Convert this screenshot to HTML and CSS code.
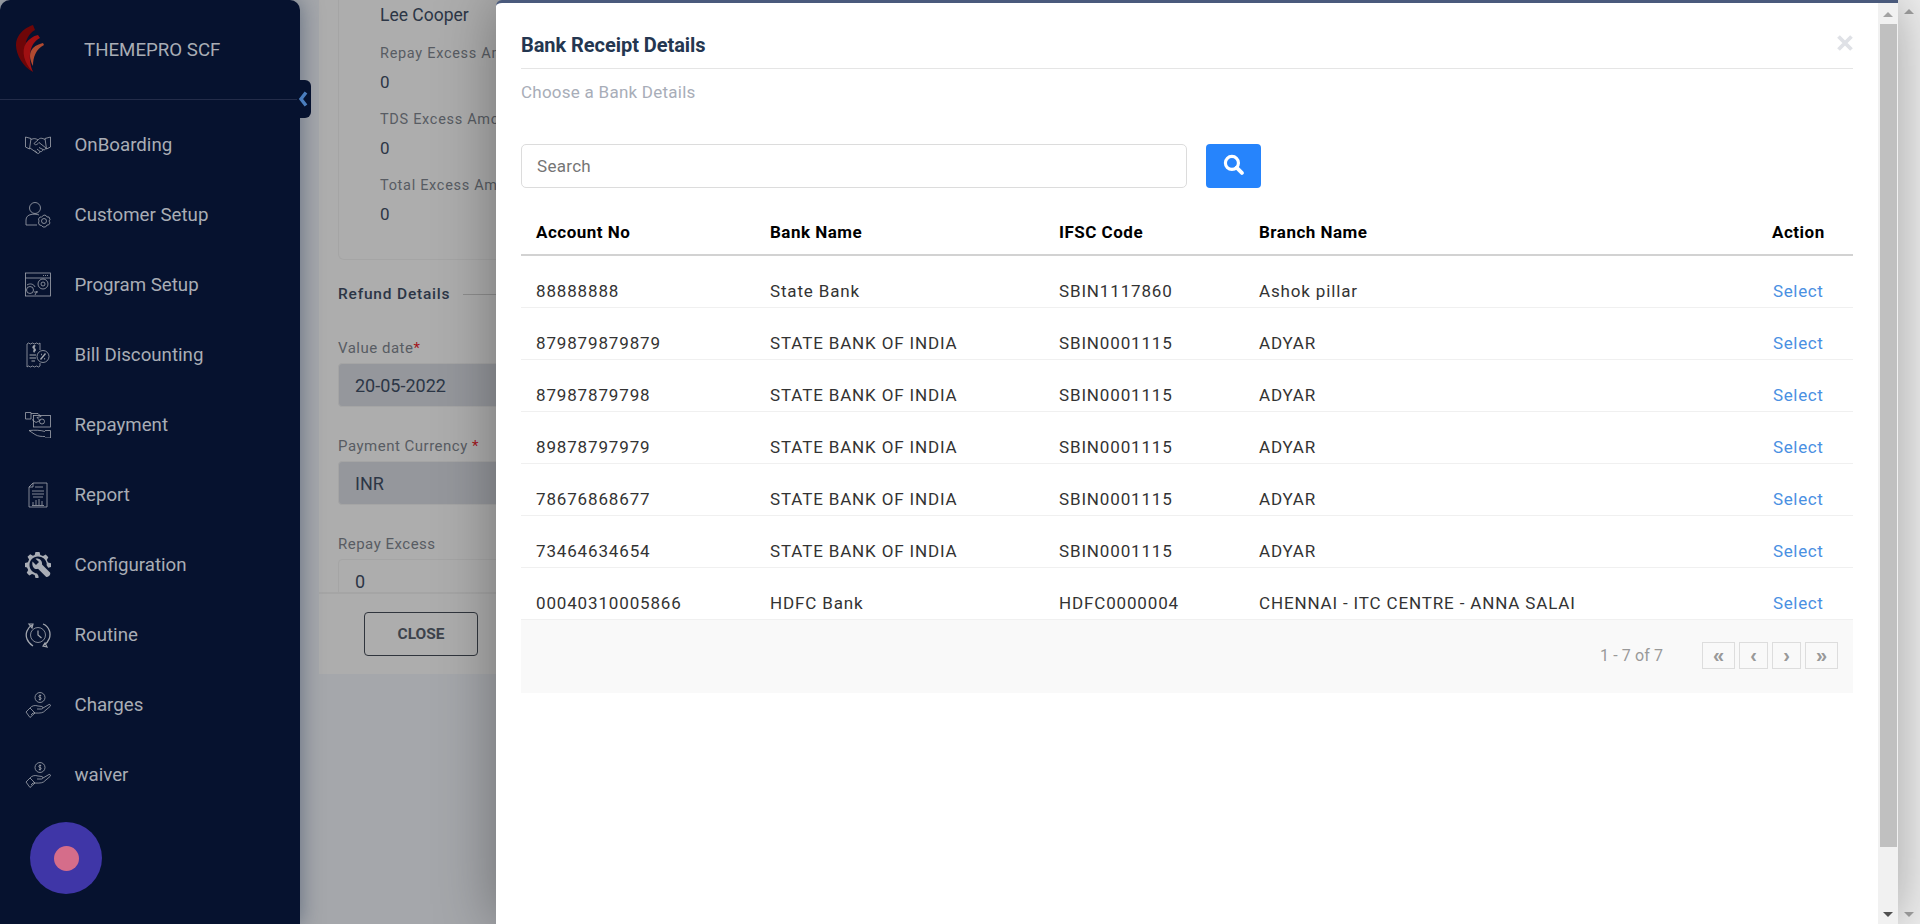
FILE: index.html
```html
<!DOCTYPE html>
<html>
<head>
  <meta charset="utf-8">
  <title>Bank Receipt Details</title>
  <link rel="stylesheet" href="styles.css">
</head>

<body>
  <div class="app">

    <aside class="sidebar">
      <div class="brand">
        <svg class="logo" viewBox="0 0 30 48">
          <path d="M18 0 L20 5 C10 10 5 28 18 47 C5 40 -3 22 3 12 C6 6 12 2 18 0 Z" fill="#6e0608"/>
          <path d="M23 10 L25 13 C15 18 12 32 18 47 C9 38 6 26 11 18 C14 14 18 11 23 10 Z" fill="#a01012"/>
          <path d="M28 18 L29 20 C21 24 18 32 18 41 C14 34 14 27 18 23 C21 20 25 19 28 18 Z" fill="#b04a30"/>
        </svg>
        <span class="brand-name">THEMEPRO SCF</span>
      </div>
      <button class="collapse-tab">
        <svg viewBox="0 0 10 16" width="10" height="16"><path d="M8 1.500 L3 8 L8 14.500" fill="none" stroke="#4a7dbd" stroke-width="3.400"/></svg>
      </button>

      <nav class="menu">
        <a class="menu-item">
          <svg class="menu-icon" viewBox="0 0 26 26">
            <path d="M0.500 5 L6 6.500 L4.500 17 L0.500 15 Z M25.500 5 L20 6.500 L21.500 17 L25.500 15 Z"/>
            <path d="M6 7.500 C9 6 11 6.500 13 8 L9 11.500 C10 13.500 12 13 14 10.500 L21 16 C20.500 18 19 18 18 17.500 C17.500 19.500 16 20 15 19.500 C14.500 21.500 13 22 12 21 L5 16"/>
            <path d="M20 7.500 C17 6 15 5.500 13 8 M14 15.500 L18 17.500 M12 17 L15 19.500 M10 18.500 L12 21"/>
          </svg>
          <span>OnBoarding</span>
        </a>
        <a class="menu-item">
          <svg class="menu-icon" viewBox="0 0 26 26">
            <circle cx="10" cy="6" r="5.500"/>
            <path d="M14 13 C12 12 8 12 6 12.500 C3 13 1 15 1 18 L1 23 L12 23"/>
            <circle cx="19" cy="19" r="2.500"/>
            <path d="M19 13 L21 13.500 L22 15 L24 15 L25 17.500 L24 19 L25 21 L23.500 23 L22 23 L20.500 25 L18 25 L16.500 23.500 L14.500 23 L13.500 21 L14 19 L13.500 17 L15 15 L16.500 15 Z"/>
          </svg>
          <span>Customer Setup</span>
        </a>
        <a class="menu-item">
          <svg class="menu-icon" viewBox="0 0 26 26">
            <rect x="0.500" y="1" width="25" height="23"/>
            <path d="M0.500 6 H25.500 M20 3.500 H21 M22 3.500 H23 M18 3.500 H19"/>
            <circle cx="18" cy="12" r="5"/>
            <circle cx="18" cy="12" r="2"/>
            <circle cx="5" cy="18" r="3.500"/>
            <path d="M2 13 C5 11 9 12 10 15 M9 20 L13 20 M10 23 L12 19"/>
          </svg>
          <span>Program Setup</span>
        </a>
        <a class="menu-item">
          <svg class="menu-icon" viewBox="0 0 26 26">
            <path d="M15 8 V1 L13.500 2 L11.500 1 L9.500 2 L7.500 1 L5.500 2 L3.500 1 L2 2 V25 L3.500 24 L5.500 25 L7.500 24 L9.500 25 L11.500 24 L13.500 25 L15 24 V21"/>
            <circle cx="18" cy="14.500" r="6"/>
            <path d="M15.500 17.500 L20.500 11.500 M16 12.500 H16.800 M19.300 16.800 H20.100" stroke-width="1.400"/>
            <path d="M4.500 13 H11 M4.500 16 H11 M6.500 19 H10" stroke-width="1.200"/>
            <path d="M10.500 4 C8 3.500 7 6 9 6.500 C11 7 11 9.500 8 9 M9.200 3 V10.500" stroke-width="1.200"/>
          </svg>
          <span>Bill Discounting</span>
        </a>
        <a class="menu-item">
          <svg class="menu-icon" viewBox="0 0 26 26">
            <path d="M0.500 0.500 H6 V7 H0.500 Z M6 1.500 H13 L16 4.500 L12 5.500 L15 8.500 L11 10.500 L7 7.500"/>
            <rect x="8.500" y="3.500" width="17" height="11.500"/>
            <circle cx="17" cy="9.500" r="2.500"/>
            <path d="M20 18.500 H25.500 V26 H20 M20 19.500 C15 18 10 18 4 18.500 L10 22.500 C13 24.500 17 24.500 20 24.500"/>
          </svg>
          <span>Repayment</span>
        </a>
        <a class="menu-item">
          <svg class="menu-icon" viewBox="0 0 26 26">
            <path d="M8 1 H22 V25 H4 V5 Z M8 1 V5 H4"/>
            <path d="M10 5 H18 M7 9 H19 M7 12 H19 M8 15 H18" stroke-width="0.800"/>
            <path d="M8 23 V20 M11 23 V18 M14 23 V17 M17 23 V19 M7 23.500 H19"/>
          </svg>
          <span>Report</span>
        </a>
        <a class="menu-item">
          <svg class="menu-icon-solid" viewBox="0 0 26 26">
            <path fill-rule="evenodd" d="M10.500 0 H14.500 L15.300 3 L18 4.100 L20.700 2.500 L23.300 5.200 L21.800 7.900 L23 10.600 L26 11.300 V15 L23.200 15.800 L21.500 13 L21.800 12 C21.500 7.500 17.500 4.500 13 4.500 C8 4.500 4.500 8.500 4.500 13 C4.500 17.500 8 21 12 21.500 L13.500 24 L13.500 26 H10.500 L9.700 23 L7 21.900 L4.300 23.500 L1.700 20.800 L3.200 18.100 L2 15.400 L0 15 V11 L2.900 10.200 L4.100 7.500 L2.500 4.800 L5.200 2.200 L7.900 3.800 L9.700 3 Z"/>
            <path d="M7.500 9.500 L11 13 L14 10 L10.500 6.800 C14 5.800 17.500 8.500 17 12.500 L25 20.500 C26.200 22.500 23.500 26 21 24.800 L13 16.800 C9.500 18 6.500 14.500 7.500 9.500 Z"/>
          </svg>
          <span>Configuration</span>
        </a>
        <a class="menu-item">
          <svg class="menu-icon" viewBox="0 0 26 26">
            <circle cx="13" cy="13" r="7.500"/>
            <path d="M13 8.500 V13 L16.500 16" stroke-width="1.200"/>
            <path d="M7 3 C2 6 0 12 2 17 C3 20 5 22 8 24 M19 23 C24 20 26 14 24.500 9 C23.500 6 21 3 18 2" stroke-width="1.300"/>
            <path d="M4 2 L8 2 L7 6 Z M22 25 L18 24 L20 21 Z" stroke-width="1.200"/>
          </svg>
          <span>Routine</span>
        </a>
        <a class="menu-item">
          <svg class="menu-icon" viewBox="0 0 26 26">
            <circle cx="15" cy="5.500" r="5"/>
            <path d="M16.200 3.500 H14.500 C13.500 3.500 13.500 5.500 15 5.500 C16.500 5.500 16.500 7.500 15 7.500 H13.800 M15 2.500 V8.500" stroke-width="0.800"/>
            <path d="M5 16 C7 13.500 10 13 13 14 L17 14.500 C18.500 15 18 17 16.500 17 L12 17 M18 16 L24 12.500 C25.500 12 26 13.500 25 14.500 L18.500 20 C16 21.500 12 21 8 21 L6 23"/>
            <path d="M1 20 L5 16 L10 21 L5 25.500 Z"/>
          </svg>
          <span>Charges</span>
        </a>
        <a class="menu-item">
          <svg class="menu-icon" viewBox="0 0 26 26">
            <circle cx="15" cy="5.500" r="5"/>
            <path d="M16.200 3.500 H14.500 C13.500 3.500 13.500 5.500 15 5.500 C16.500 5.500 16.500 7.500 15 7.500 H13.800 M15 2.500 V8.500" stroke-width="0.800"/>
            <path d="M5 16 C7 13.500 10 13 13 14 L17 14.500 C18.500 15 18 17 16.500 17 L12 17 M18 16 L24 12.500 C25.500 12 26 13.500 25 14.500 L18.500 20 C16 21.500 12 21 8 21 L6 23"/>
            <path d="M1 20 L5 16 L10 21 L5 25.500 Z"/>
          </svg>
          <span>waiver</span>
        </a>
      </nav>
    </aside>

    <main class="page">
      <div class="panel">
        <div class="panel-body">
          <div class="summary">
            <div class="summary-name">Lee Cooper</div>
            <div class="summary-label">Repay Excess Amount</div>
            <div class="summary-value">0</div>
            <div class="summary-label">TDS Excess Amount</div>
            <div class="summary-value">0</div>
            <div class="summary-label">Total Excess Amount</div>
            <div class="summary-value">0</div>
          </div>
          <div class="section-title"><span>Refund Details</span><i></i></div>
          <label class="field-label">Value date<b>*</b></label>
          <div class="field field-disabled">20-05-2022</div>
          <label class="field-label">Payment Currency <b>*</b></label>
          <div class="field field-disabled">INR</div>
          <label class="field-label">Repay Excess</label>
          <div class="field">0</div>
        </div>
        <div class="panel-footer">
          <button class="btn-close">CLOSE</button>
        </div>
      </div>
    </main>

    <div class="fab"><span></span></div>

    <section class="modal">
      <div class="modal-content">
        <div class="modal-header">
          <h2>Bank Receipt Details</h2>
          <svg class="modal-x" viewBox="0 0 16 16"><path d="M1.500 1.500 L14.500 14.500 M14.500 1.500 L1.500 14.500" stroke="#dfe1e6" stroke-width="3.800"/></svg>
        </div>
        <p class="modal-sub">Choose a Bank Details</p>

        <div class="search-row">
          <input class="search-input" type="text" placeholder="Search">
          <button class="search-btn">
            <svg viewBox="0 0 20 20" width="21" height="21"><circle cx="8.500" cy="8.500" r="6.200" fill="none" stroke="#fff" stroke-width="3"/><path d="M13 13 L18 18" stroke="#fff" stroke-width="3.600" stroke-linecap="round"/></svg>
          </button>
        </div>

        <table class="bank-table">
          <colgroup>
            <col class="col-account"><col class="col-bank"><col class="col-ifsc"><col class="col-branch"><col class="col-action">
          </colgroup>
          <thead>
            <tr><th>Account No</th><th>Bank Name</th><th>IFSC Code</th><th>Branch Name</th><th>Action</th></tr>
          </thead>
          <tbody>
            <tr><td>88888888</td><td>State Bank</td><td>SBIN1117860</td><td>Ashok pillar</td><td><a>Select</a></td></tr>
            <tr><td>879879879879</td><td>STATE BANK OF INDIA</td><td>SBIN0001115</td><td>ADYAR</td><td><a>Select</a></td></tr>
            <tr><td>87987879798</td><td>STATE BANK OF INDIA</td><td>SBIN0001115</td><td>ADYAR</td><td><a>Select</a></td></tr>
            <tr><td>89878797979</td><td>STATE BANK OF INDIA</td><td>SBIN0001115</td><td>ADYAR</td><td><a>Select</a></td></tr>
            <tr><td>78676868677</td><td>STATE BANK OF INDIA</td><td>SBIN0001115</td><td>ADYAR</td><td><a>Select</a></td></tr>
            <tr><td>73464634654</td><td>STATE BANK OF INDIA</td><td>SBIN0001115</td><td>ADYAR</td><td><a>Select</a></td></tr>
            <tr><td>00040310005866</td><td>HDFC Bank</td><td>HDFC0000004</td><td>CHENNAI - ITC CENTRE - ANNA SALAI</td><td><a>Select</a></td></tr>
          </tbody>
        </table>

        <div class="pager">
          <span class="pager-count">1 - 7 of 7</span>
          <button class="pager-btn pager-wide">«</button>
          <button class="pager-btn">‹</button>
          <button class="pager-btn">›</button>
          <button class="pager-btn pager-wide">»</button>
        </div>
      </div>

      <div class="scrollbar">
        <i class="arrow-up"></i>
        <div class="scroll-thumb"></div>
        <i class="arrow-down"></i>
      </div>
    </section>

    <div class="page-scrollbar">
      <i class="arrow-up"></i>
      <i class="arrow-down"></i>
    </div>

  </div>
</body>
</html>
```

FILE: styles.css
```css
* {
  box-sizing: border-box;
}

html, body {
  margin: 0;
  height: 100%;
  overflow: hidden;
}

body {
  font-family: Roboto, "Liberation Sans", sans-serif;
  color: #333;
}

.app {
  position: relative;
  display: flex;
  height: 924px;
  background-color: #a5a7ab;
  overflow: hidden;
}

/* sidebar */
.sidebar {
  position: relative;
  flex: 0 0 300px;
  background-color: #06122f;
  border-radius: 10px 10px 0 0;
  box-shadow: 0 0 22px rgba(40, 60, 90, 0.55);
  z-index: 2;
}

.brand {
  display: flex;
  align-items: center;
  height: 100px;
  padding-left: 15px;
  border-bottom: 1px solid #232c49;
}

.logo {
  width: 30px;
  height: 48px;
  margin-top: -2px;
}

.brand-name {
  margin-left: 39px;
  font-size: 18.700px;
  color: #a9adb5;
}

.collapse-tab {
  position: absolute;
  top: 80px;
  left: 297px;
  display: flex;
  align-items: center;
  width: 14px;
  height: 38px;
  padding: 0 0 0 1px;
  border: none;
  border-radius: 0 6px 6px 0;
  background-color: #06122f;
}

.menu {
  padding-top: 10px;
}

.menu-item {
  display: flex;
  align-items: center;
  height: 70px;
  padding-left: 25px;
  font-size: 18.700px;
  color: #a9adb5;
}

.menu-item span {
  margin-left: 23.500px;
}

.menu-icon,
.menu-icon-solid {
  flex: 0 0 26px;
  width: 26px;
  height: 26px;
}

.menu-icon {
  fill: none;
  stroke: #a2a6ae;
  stroke-width: 0.800;
}

.menu-icon-solid {
  fill: #a9adb5;
}

.fab {
  position: absolute;
  top: 822px;
  left: 30px;
  display: flex;
  align-items: center;
  justify-content: center;
  width: 72px;
  height: 72px;
  border-radius: 50%;
  background-color: #3f36a7;
  z-index: 3;
}

.fab span {
  width: 25px;
  height: 25px;
  border-radius: 50%;
  background-color: #d56d8a;
}

/* page behind the modal */
.page {
  flex: 1;
  padding-left: 19px;
  min-width: 0;
}

.panel {
  width: 1400px;
  height: 674px;
  background-color: #adadad;
}

.panel-body {
  height: 592px;
  padding: 0 19px;
  overflow: hidden;
}

.summary {
  height: 260px;
  padding-left: 41px;
  border: 1px solid #a5a5a5;
  border-top: none;
  border-radius: 0 0 6px 6px;
  color: #2c3646;
}

.summary-name {
  margin-bottom: -4px;
  font-size: 17.500px;
  line-height: 30px;
}

.summary-label {
  margin-top: 18px;
  font-size: 14.500px;
  line-height: 20px;
  letter-spacing: 0.700px;
  color: #585c63;
}

.summary-value {
  margin-top: 8px;
  font-size: 17px;
  line-height: 20px;
}

.section-title {
  display: flex;
  align-items: center;
  height: 20px;
  margin-top: 24px;
  font-size: 15.500px;
  font-weight: 500;
  letter-spacing: 0.800px;
  color: #2c3646;
}

.section-title i {
  flex: 1;
  height: 1px;
  margin-left: 13px;
  background-color: #8e8e8e;
}

.field-label {
  display: block;
  margin-top: 34px;
  font-size: 15px;
  line-height: 20px;
  letter-spacing: 0.500px;
  color: #585c63;
}

.field-label b {
  font-weight: 400;
  color: #a3141c;
}

.field {
  height: 44px;
  margin-top: 5px;
  padding-left: 16px;
  border: 1px solid #a5a5a5;
  border-radius: 4px;
  font-size: 18px;
  line-height: 43px;
  color: #2c3646;
}

.field-disabled {
  background-color: #95979c;
}

.field + .field-label {
  margin-top: 29px;
}

.panel-footer {
  height: 82px;
  padding: 18px 0 0 45px;
  border-top: 2px solid #a5a5a5;
}

.btn-close {
  width: 114px;
  height: 44px;
  border: 1px solid #30353d;
  border-radius: 4px;
  background: transparent;
  font-family: Roboto, sans-serif;
  font-size: 15.500px;
  font-weight: 700;
  color: #3d434c;
}

/* modal */
.modal {
  position: absolute;
  top: 0;
  left: 496px;
  display: flex;
  width: 1402px;
  height: 924px;
  border-top: 3px solid #4a5a7c;
  border-radius: 6px 0 0 0;
  background-color: #fff;
  box-shadow: 0 0 60px rgba(0, 0, 0, 0.35);
  z-index: 4;
}

.modal-content {
  flex: 1;
  padding: 0 25px;
}

.modal-header {
  display: flex;
  align-items: center;
  justify-content: space-between;
  height: 66px;
  padding-top: 18px;
  border-bottom: 1px solid #e5e5e5;
}

.modal-header h2 {
  margin: 0;
  font-size: 20px;
  font-weight: 700;
  letter-spacing: -0.050px;
  color: #243650;
}

.modal-x {
  width: 16px;
  height: 16px;
  margin-top: -3px;
}

.modal-sub {
  margin: 12px 0 0;
  font-size: 17px;
  line-height: 22px;
  letter-spacing: 0.250px;
  color: #a8adb8;
}

.search-row {
  display: flex;
  gap: 19px;
  margin-top: 41px;
}

.search-input {
  width: 666px;
  height: 44px;
  padding: 0 15px;
  border: 1px solid #dcdcdc;
  border-radius: 5px;
  font-family: Roboto, sans-serif;
  font-size: 17px;
  letter-spacing: 0.300px;
  color: #333;
}

.search-input::placeholder {
  color: #757575;
}

.search-btn {
  display: flex;
  align-items: center;
  justify-content: center;
  width: 55px;
  height: 44px;
  padding: 0 0 4px;
  border: none;
  border-radius: 4px;
  background-color: #2684fc;
}

.bank-table {
  width: 1332px;
  margin-top: 20px;
  border-collapse: collapse;
  table-layout: fixed;
}

.col-account { width: 234px; }
.col-bank { width: 289px; }
.col-ifsc { width: 200px; }
.col-branch { width: 513px; }
.col-action { width: 96px; }

.bank-table th {
  padding: 14px 15px 12px;
  border-bottom: 2px solid #d2d2d2;
  font-size: 17px;
  line-height: 20px;
  font-weight: 700;
  letter-spacing: 0.500px;
  text-align: left;
  color: #000;
}

.bank-table td {
  padding: 24.500px 15px 6.500px;
  border-bottom: 1px solid #f0f0f0;
  font-size: 17px;
  line-height: 20px;
  letter-spacing: 0.850px;
  color: #333;
  white-space: nowrap;
}

.bank-table td a {
  margin-left: 1px;
  letter-spacing: 0.630px;
  color: #4a90e2;
}

.pager {
  display: flex;
  align-items: center;
  justify-content: flex-end;
  gap: 4px;
  height: 73px;
  padding: 0 15px 3px 0;
  background-color: #f9f9f9;
}

.pager-count {
  margin-right: 35px;
  font-size: 16px;
  letter-spacing: 0.100px;
  color: #999;
}

.pager-btn {
  width: 29px;
  height: 27px;
  padding: 0;
  border: 1px solid #ddd;
  background: transparent;
  font-family: "Liberation Sans", sans-serif;
  font-size: 20px;
  font-weight: 700;
  line-height: 24px;
  color: #999;
}

.pager-wide {
  width: 33px;
}

/* scrollbars */
.scrollbar,
.page-scrollbar {
  position: relative;
  background-color: #f1f1f1;
}

.scrollbar {
  flex: 0 0 20px;
}

.page-scrollbar {
  position: absolute;
  top: 0;
  right: 0;
  width: 22px;
  height: 924px;
}

.scroll-thumb {
  position: absolute;
  top: 21px;
  left: 2px;
  width: 17px;
  height: 823px;
  background-color: #c0c0c0;
}

.arrow-up,
.arrow-down {
  position: absolute;
  left: 50%;
  margin-left: -5px;
  border-left: 5px solid transparent;
  border-right: 5px solid transparent;
}

.arrow-up {
  top: 9px;
  border-bottom: 5px solid #a3a3a3;
}

.arrow-down {
  bottom: 7px;
  border-top: 5px solid #505050;
}

.page-scrollbar .arrow-down {
  border-top-color: #a3a3a3;
}
```
